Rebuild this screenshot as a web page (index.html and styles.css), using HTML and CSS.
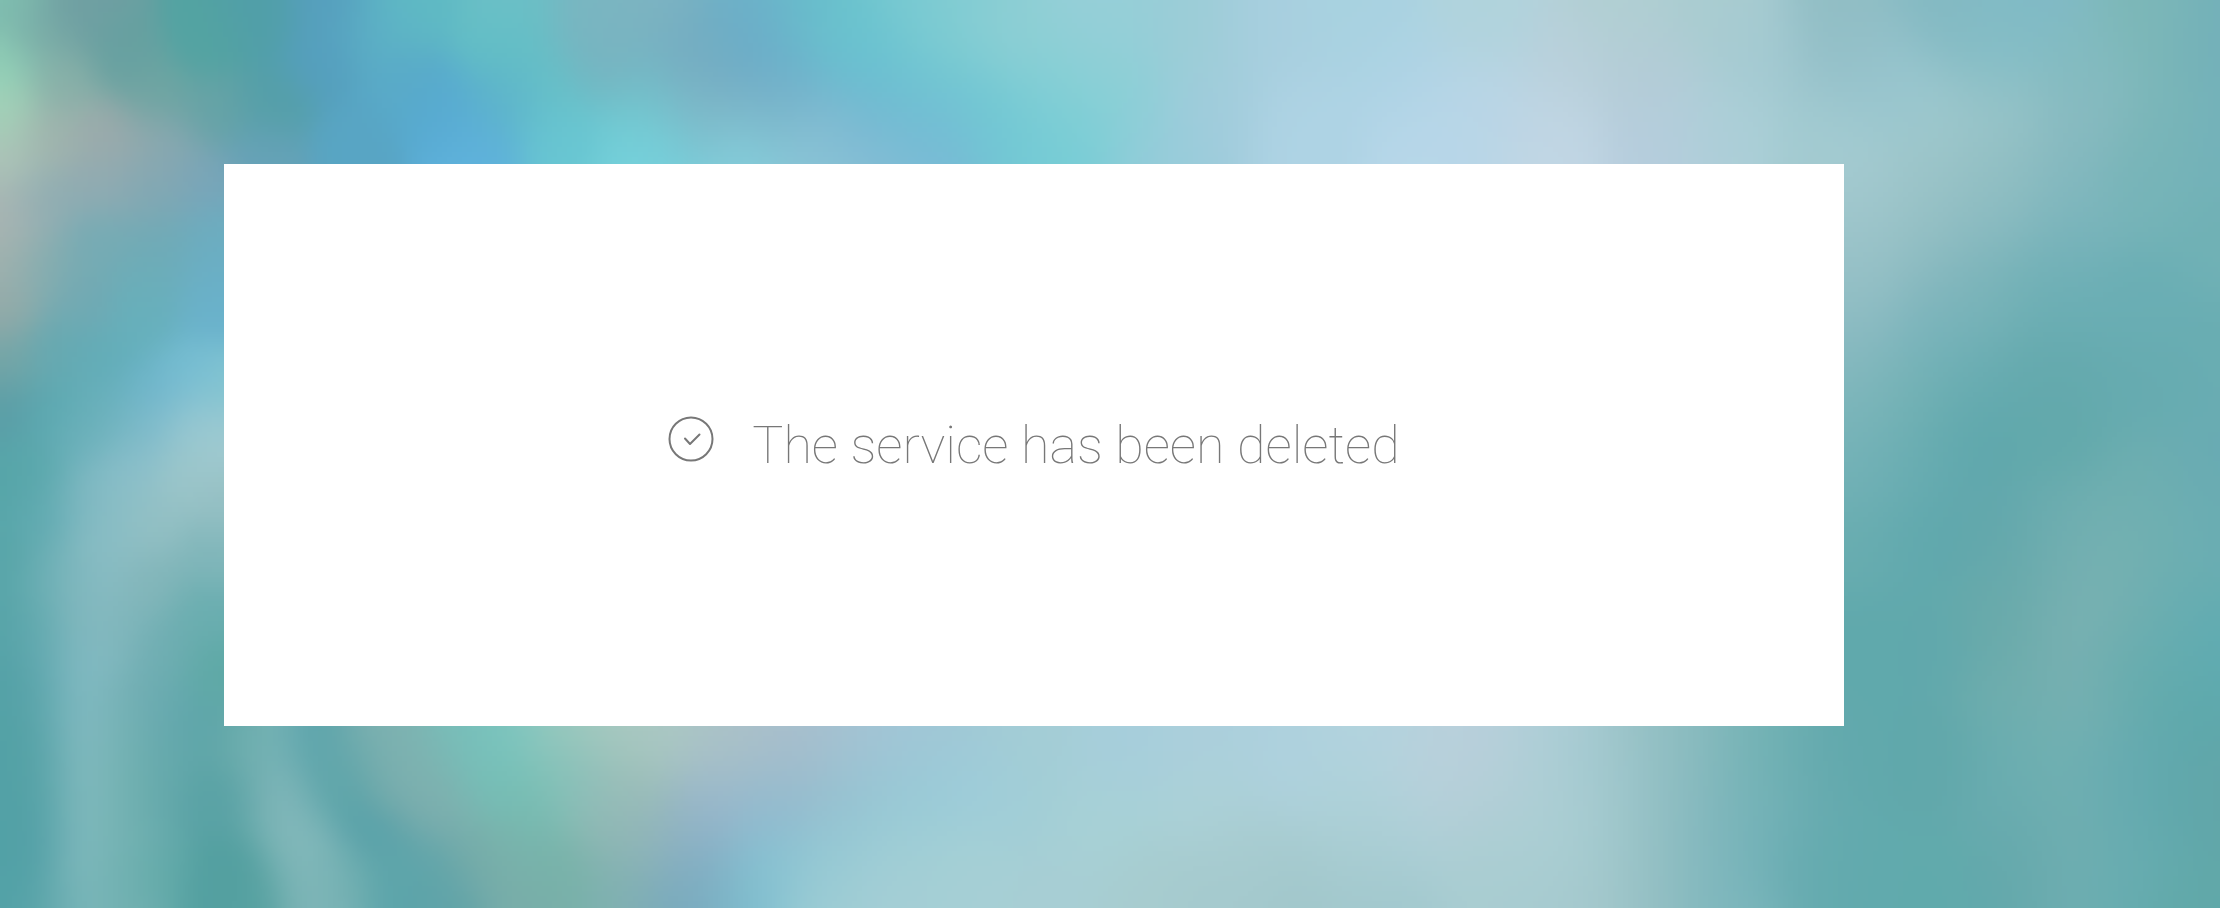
FILE: index.html
```html
<!DOCTYPE html>
<html lang="en">
<head>
<meta charset="utf-8">
<title>Service deleted</title>
<link rel="stylesheet" href="styles.css">
</head>
<body>
<canvas class="backdrop" width="444" height="182" aria-hidden="true"></canvas>
<main class="page">
  <section class="card">
    <div class="notice" role="status">
      <svg class="notice-icon" viewBox="0 0 46 46" fill="none" stroke="currentColor" stroke-width="2" stroke-linecap="round" stroke-linejoin="round" aria-hidden="true">
        <circle cx="23" cy="23" r="21.5"/>
        <path d="M17 22.500l5 5.500 9.500-9.500"/>
      </svg>
      <h1 class="notice-text">The service has been deleted</h1>
    </div>
  </section>
</main>
<script src="backdrop.js"></script>
</body>
</html>
```

FILE: styles.css
```css
* {
  box-sizing: border-box;
}

body {
  margin: 0;
  background: #62a9ad;
  font-family: Roboto, "Helvetica Neue", "Liberation Sans", sans-serif;
}

.backdrop {
  position: fixed;
  inset: 0;
  z-index: -1;
  width: 100%;
  height: 100%;
}

.page {
  display: flex;
  min-height: 100vh;
  padding: 164px 376px 182px 224px;
}

.card {
  display: flex;
  flex: 1;
  align-items: center;
  justify-content: center;
  padding: 32px;
  background: #fff;
}

.notice {
  display: flex;
  align-items: flex-start;
  gap: 38px;
  padding-top: 2px;
}

.notice-icon {
  flex: none;
  width: 46px;
  height: 46px;
  color: #777;
}

.notice-text {
  margin: 0;
  color: #777;
  font-size: 52px;
  font-weight: 100;
  line-height: 60px;
}
```

FILE: backdrop.js
```js
// Soft colour field: every pixel is a distance-weighted mix of these points.
// Each entry is x, y, colour on a 2220 x 908 field.
const points = [
  [0, 0, "7fbfb0"], [0, 60, "92d2b8"], [0, 110, "a4d2b8"], [0, 160, "adc4b8"], [35, 30, "78aaa6"],
  [60, 80, "88b0a8"], [50, 135, "a0b3ad"], [108, 133, "9caaab"], [160, 145, "8ba8b0"], [80, 10, "6f9fa2"],
  [120, 50, "66a0a0"], [200, 40, "53a3a2"], [150, 90, "6fa5a2"], [210, 110, "66a3a6"], [270, 100, "549fa8"],
  [260, 20, "519fa8"], [260, 155, "66a2b8"], [320, 60, "559fbf"], [325, 10, "569fbe"], [350, 140, "58a5c4"],
  [370, 30, "5cb0c6"], [400, 80, "59aac8"], [440, 110, "57aad2"], [470, 150, "5fb2dc"], [410, 10, "5fbac4"],
  [500, 45, "62bfc5"], [510, 5, "6cbfc6"], [500, 95, "5db3cb"], [550, 75, "66c1c7"], [560, 130, "68c6d2"],
  [640, 130, "71cfd6"], [650, 160, "78d2de"], [590, 20, "7ab7c1"], [600, 50, "7ab0bf"], [660, 10, "7db4c2"],
  [640, 85, "72bcc6"], [690, 115, "80bccb"],
  [700, 80, "7aafc2"], [690, 45, "73aabf"], [740, 15, "6db2c9"], [745, 50, "69a9c8"], [790, 80, "6cb0cc"],
  [760, 105, "7fb4c6"], [740, 150, "84d0dc"], [810, 155, "8cc8d8"], [820, 125, "84bad0"], [870, 110, "72b3d0"], [930, 150, "7cbad6"],
  [870, 150, "88bed6"], [930, 115, "70bcd4"],
  [800, 20, "68bccb"], [850, 30, "6bc5cd"], [860, 60, "66c0d2"], [900, 90, "6ac4d2"], [930, 60, "76cbd1"],
  [910, 10, "7acad2"], [980, 100, "70cad2"], [1010, 130, "70c6d4"], [1070, 155, "76cdd6"], [1010, 40, "90cfd4"],
  [1050, 85, "88d0d5"], [960, 20, "86cdd3"], [1060, 120, "78ced5"],
  [1100, 15, "96cfd8"], [1100, 70, "92cfd6"], [1120, 110, "88d0d6"], [1150, 150, "98cbda"], [1190, 40, "9bccd6"],
  [1200, 110, "a2ccdc"], [1260, 40, "a8cfdf"], [1300, 120, "aed3e4"], [1360, 20, "a8d2e0"], [1400, 70, "aed3e5"],
  [1430, 130, "b7d7e9"], [1480, 20, "b0d3dc"], [1480, 100, "b9d5e6"], [1550, 130, "c1d6e4"], [1570, 60, "b9d0db"],
  [1650, 70, "b3cbd6"], [1660, 130, "b6cddd"], [1620, 10, "b0cfd2"], [1710, 10, "a9ccd0"], [1720, 120, "abcfd7"],
  [1760, 50, "a4cad2"], [1840, 20, "90bdc3"], [1830, 120, "a3cbd1"], [1850, 60, "93bfc9"], [1890, 80, "99c7d0"],
  [1940, 15, "83b9c2"], [2020, 10, "7fb9c6"], [2000, 50, "86bfc6"], [1930, 120, "9dc7cc"], [2000, 110, "97c3c8"],
  [2080, 60, "82bbc0"], [2080, 110, "88bac0"], [2150, 30, "7cb7b7"], [2215, 40, "72b0b9"], [2160, 120, "7ab6b8"],
  [2215, 140, "72b1b9"], [1860, 190, "a4cad0"], [1930, 190, "9cc4c8"], [1860, 240, "9bc3c9"], [2000, 180, "93c0c3"],
  [1920, 240, "93bfc3"], [2060, 180, "83b8bf"], [1860, 290, "93bfc5"], [1980, 230, "87b9c0"], [1940, 290, "81b5bd"],
  [2060, 240, "77b3ba"], [2140, 190, "76b4b8"], [2215, 240, "70b1b5"], [1860, 350, "88b9c0"], [1930, 340, "78b4bb"],
  [1990, 290, "74b2b6"], [2060, 300, "6baeb4"], [2140, 300, "6aaeb4"], [1860, 410, "7db6bb"], [1910, 400, "71b1b3"],
  [1970, 370, "68acb1"], [2050, 370, "64a9ad"], [2140, 380, "66abb0"], [2215, 360, "69adb2"], [1860, 470, "74b2b7"],
  [1910, 460, "65abb0"], [1970, 430, "5ea7ac"], [2050, 440, "62a9ab"], [2215, 460, "69abb3"], [2140, 480, "6daeb0"],
  [2215, 530, "68acb2"], [2170, 540, "70b0b2"],
  [1860, 540, "69adb0"], [1920, 540, "5fa8ad"], [1990, 520, "61a7ac"], [2060, 520, "6dadb0"], [2110, 540, "74b1b1"],
  [1860, 640, "60a9ac"], [1930, 640, "60a8ac"], [2000, 620, "6aaaaa"], [2070, 620, "7ab1b2"], [2120, 600, "76b0b0"],
  [2070, 570, "76b0b2"], [2010, 570, "66a9ab"],
  [2180, 590, "68adb1"], [2215, 640, "5eabb2"], [2160, 640, "66adb0"], [2010, 690, "6eadad"], [2070, 690, "78b0b2"], [2130, 680, "69adae"],
  [2180, 700, "5da8ab"], [1860, 740, "60a9ac"], [1940, 760, "60a7aa"], [2010, 760, "6baeb1"], [2060, 760, "72b1b1"],
  [2120, 770, "65aab1"], [2180, 800, "5da8ab"], [2217, 800, "64a5a8"], [2070, 810, "71afb1"], [2010, 810, "68abaf"], [2125, 820, "66abb0"],
  [2070, 860, "70aeb1"], [2010, 860, "64a8ab"],
  [2130, 870, "67adb1"], [2190, 890, "60a8a8"], [1940, 880, "60aaac"], [1860, 860, "61aaad"], [1810, 760, "65a9ae"],
  [1760, 740, "72b3b4"], [1700, 740, "86b9bd"], [1650, 740, "96c1c5"], [1590, 750, "a4c9d0"], [1540, 740, "afcfd8"],
  [1800, 850, "67abb0"], [1740, 830, "75b3b9"], [1690, 830, "87b9bf"], [1640, 830, "99c3c6"], [1580, 830, "a8cdd2"],
  [1750, 785, "73b2b6"], [1695, 785, "86b9be"], [1645, 785, "97c2c6"], [1590, 790, "a6cbd1"], [1535, 790, "b0cfd6"], [1530, 840, "accfd4"],
  [1720, 890, "7bb6bc"], [1660, 890, "92bec2"], [1600, 890, "a4c8cc"], [1540, 890, "a7cbd0"], [1480, 740, "b9cfdb"], [1430, 770, "b9d1dc"],
  [1370, 740, "b2d3de"], [1470, 800, "b4ced7"], [1400, 830, "aed0d8"], [1340, 800, "aed2da"], [1480, 860, "a9cdd1"], [1300, 890, "a0c6ca"],
  [1340, 850, "a9cdd2"],
  [1380, 890, "a1c8cd"], [1250, 850, "a8ccd0"], [1280, 770, "aed1de"], [1200, 800, "abd1d7"], [1200, 740, "abcfdc"],
  [1120, 750, "a6cedb"], [1100, 820, "a7d1d6"], [1150, 890, "a7cccf"], [1220, 900, "a4c9cd"], [1050, 890, "a7ced4"], [1020, 740, "a4cdd5"],
  [1010, 800, "a2ced6"], [960, 860, "a6d0d5"], [950, 740, "a0c7d5"], [970, 780, "9ccddb"], [910, 790, "97cad6"],
  [890, 740, "a1c6d7"], [900, 840, "9fced6"], [890, 890, "a5ced5"], [840, 740, "a6c1d1"], [850, 790, "94c3d2"],
  [830, 840, "95c9d4"], [820, 890, "9ecdd4"], [780, 740, "abbfcc"], [790, 780, "9bbacb"], [770, 810, "8fbad0"],
  [770, 860, "87c3d2"], [740, 890, "7fc0d0"], [720, 740, "abc2c7"], [710, 790, "9ebaca"], [700, 830, "92b3cc"],
  [690, 865, "80abc0"], [690, 900, "77a9bd"], [660, 730, "abc8c4"], [610, 730, "a8c9c0"], [560, 730, "9ac8bd"],
  [630, 780, "9fc0b9"], [650, 830, "94b6bb"], [590, 790, "92bcb8"], [610, 830, "90b7b3"], [620, 880, "80b0b2"],
  [560, 775, "84c3ba"],
  [510, 735, "7cc6bf"], [460, 735, "77bfba"], [490, 780, "74bfb7"], [530, 800, "76bdb2"], [520, 840, "78b5ad"],
  [560, 870, "77b3a8"], [530, 900, "79ada9"], [420, 760, "7db5b2"], [440, 810, "80afae"], [480, 860, "79aca8"],
  [375, 735, "80b2b1"], [400, 780, "7dadad"], [440, 900, "5fa3a8"], [420, 860, "60a5aa"], [345, 760, "66a8ab"],
  [310, 740, "59a3ab"], [330, 790, "58a3a8"], [370, 830, "56a0a8"], [390, 890, "59a4aa"], [265, 740, "7cb6b8"],
  [275, 790, "84b8bb"], [285, 820, "84b9bb"], [295, 850, "84b9bb"], [310, 878, "82b8ba"], [320, 900, "80b6b8"], [345, 880, "6cadae"], [235, 740, "67aaa9"],
  [235, 800, "5ba3a5"], [240, 860, "529f9f"], [255, 895, "57a2a1"], [0, 210, "abb5b3"], [0, 260, "a3b2ae"],
  [0, 310, "94aaa8"], [40, 200, "8fadb2"], [100, 180, "91abb2"], [200, 180, "7aa5b9"], [150, 190, "82a8b3"], [40, 270, "83adb0"],
  [100, 240, "76abb4"], [160, 240, "70aab6"], [215, 230, "6cadc0"], [80, 300, "71a9b3"], [210, 270, "6aafc6"], [150, 280, "6baeb9"], [210, 310, "6ab2cc"],
  [140, 320, "66b0bc"], [0, 360, "74a5a6"], [50, 350, "66a9b1"], [100, 360, "62adb8"], [0, 410, "5a9da6"],
  [50, 410, "5ba9b1"], [100, 410, "69b0ba"], [150, 390, "6eb5cb"], [190, 370, "75bdd3"], [222, 385, "85c6d1"],
  [140, 430, "81bccb"], [190, 420, "97c8d2"], [220, 440, "a1cad0"], [80, 440, "6fb2bc"], [30, 460, "5aa8ac"],
  [0, 480, "55a4a7"], [120, 470, "8bbfca"], [180, 470, "9cc6ca"], [220, 500, "96c0c4"], [80, 500, "7ab6c0"],
  [40, 510, "5faab0"], [150, 520, "94c0c4"], [110, 510, "8cbfc6"], [100, 550, "8abdc4"], [210, 550, "80b6ba"], [0, 560, "57a5a8"],
  [50, 570, "6aaeb4"], [150, 580, "83b6ba"], [80, 580, "88bcc3"], [80, 610, "86b9c0"], [200, 610, "6aaeb0"], [110, 630, "80b6bb"], [78, 650, "84bbc4"],
  [40, 610, "63abaf"], [0, 620, "55a3a7"],
  [40, 650, "5fa7ae"], [0, 680, "53a1a6"], [160, 650, "70aeb3"], [210, 670, "5ea9a6"], [80, 690, "84bcc4"], [40, 700, "5aa4aa"],
  [120, 700, "75b0b4"], [160, 710, "68aab0"], [200, 730, "5ba4a8"], [0, 740, "52a1a5"], [160, 755, "65a9ac"], [40, 750, "56a2a7"], [80, 730, "85bcc3"], [80, 770, "85bcc1"],
  [120, 740, "74b1b3"],
  [120, 780, "73b1b1"], [0, 800, "52a1a5"], [160, 800, "64a9ab"], [205, 800, "57a1a4"], [40, 795, "54a1a6"], [40, 840, "529fa6"], [80, 810, "84bcc0"],
  [80, 850, "83bbbf"], [120, 820, "72b1b1"], [0, 850, "52a1a6"], [120, 860, "71b1b1"], [160, 870, "62aaa9"], [210, 880, "529fa0"], [0, 890, "52a2a7"],
  [80, 900, "80babd"], [45, 900, "5aa4a9"], [120, 900, "70b0b0"]
].map(([x, y, hex]) => {
  const n = parseInt(hex, 16);
  return [x, y, n >> 16, (n >> 8) & 255, n & 255];
});

const canvas = document.querySelector(".backdrop");
const context = canvas.getContext("2d");
const image = context.createImageData(canvas.width, canvas.height);
const scaleX = 2220 / canvas.width;
const scaleY = 908 / canvas.height;

// Closely spaced columns on the left keep a tighter falloff than the open areas.
const spreadAt = x => {
  const sigma = 25 + 11 * Math.min(1, Math.max(0, (x - 200) / 900));
  return 2 * sigma * sigma;
};

for (let row = 0, i = 0; row < canvas.height; row++) {
  for (let col = 0; col < canvas.width; col++, i += 4) {
    const spread = spreadAt(col * scaleX);
    let red = 0, green = 0, blue = 0, total = 0;
    for (const [x, y, r, g, b] of points) {
      const dx = x - col * scaleX;
      const dy = y - row * scaleY;
      const weight = Math.exp(-(dx * dx + dy * dy) / spread);
      red += r * weight;
      green += g * weight;
      blue += b * weight;
      total += weight;
    }
    image.data[i] = red / total;
    image.data[i + 1] = green / total;
    image.data[i + 2] = blue / total;
    image.data[i + 3] = 255;
  }
}
context.putImageData(image, 0, 0);
```
